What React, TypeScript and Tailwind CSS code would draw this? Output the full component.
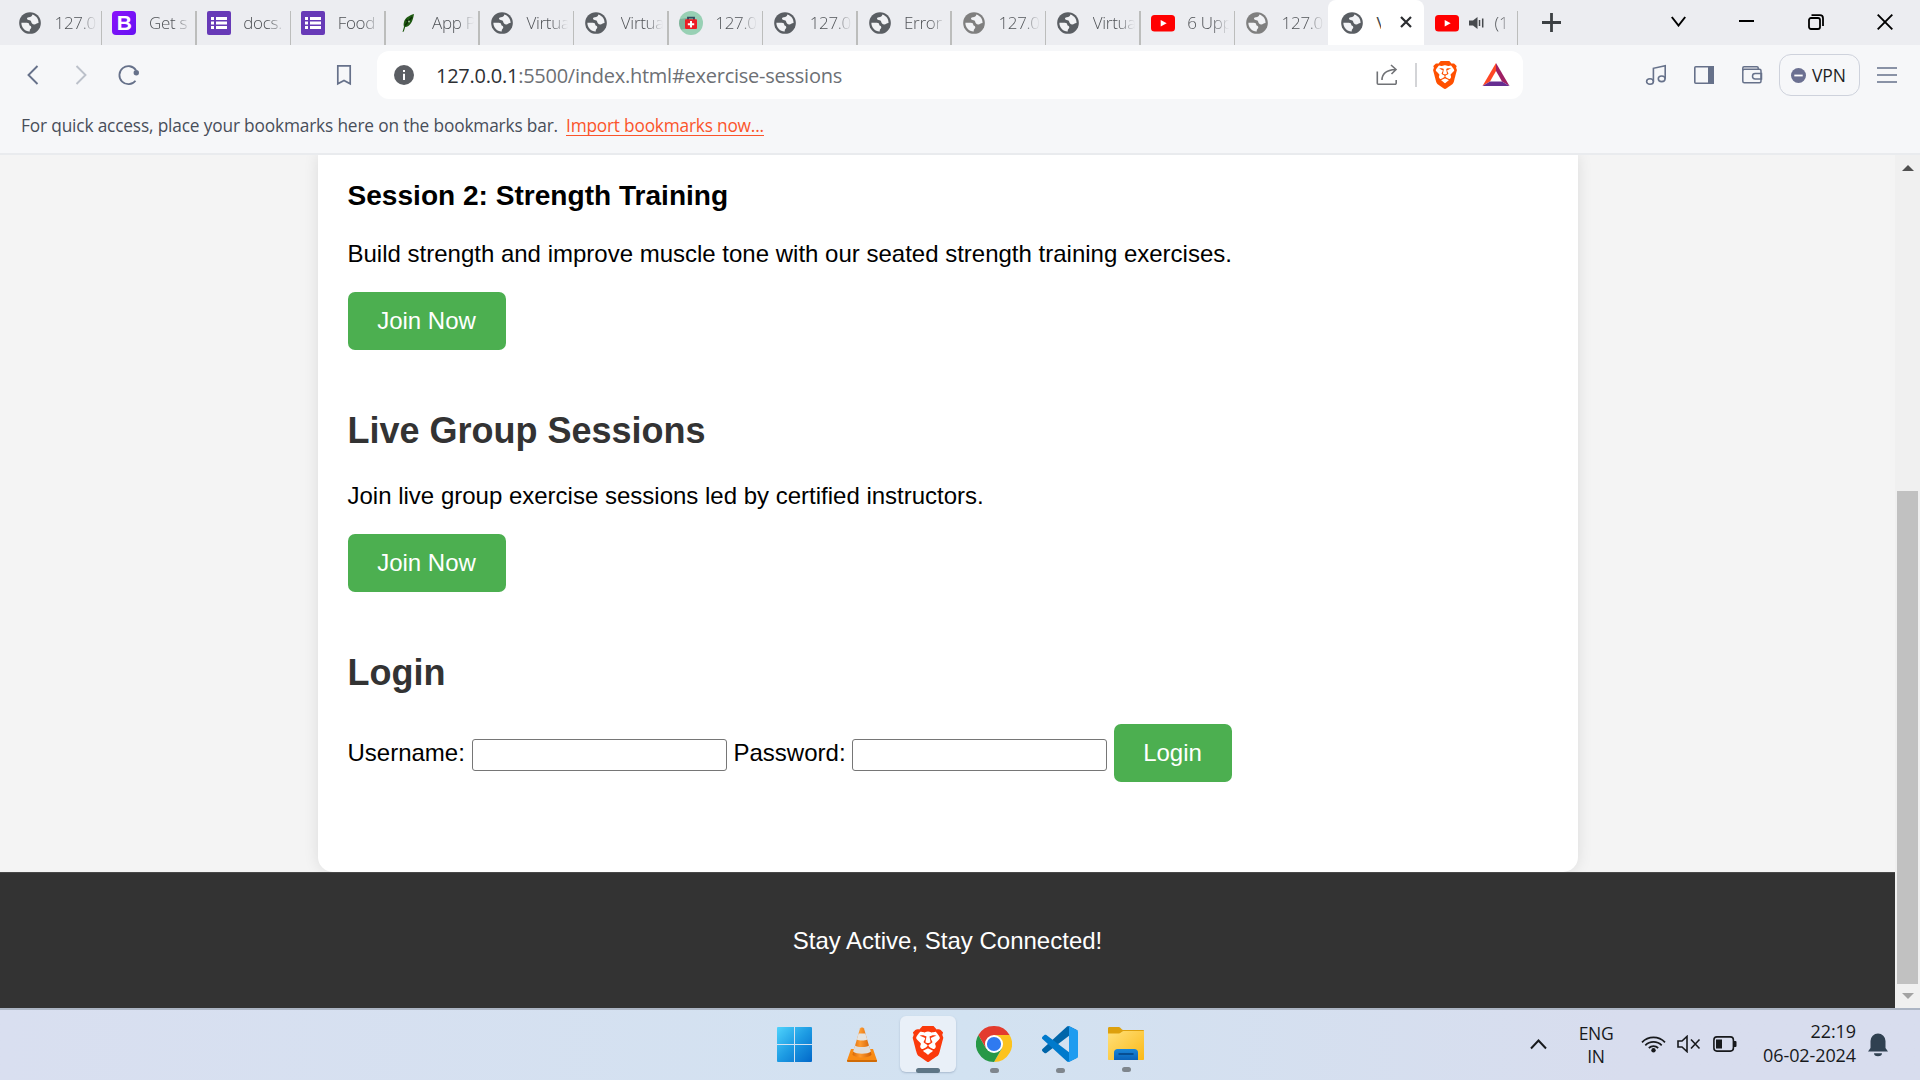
import React from "react";
import { SiBrave } from "react-icons/si";

const UI = "font-['Open_Sans','Noto_Sans',sans-serif]";

function Globe({ light = false }: { light?: boolean }) {
  return (
    <svg width="22" height="22" viewBox="0 0 24 24" className={light ? "text-[#7f7f7f]" : "text-[#5a5e63]"}>
      <circle cx="12" cy="12" r="11.8" fill="currentColor" />
      <path d="M2.600 11.800h6c1.800 0 2.600.8 2.600 2.200 0 1.300 2.200.7 2.200 2.600 0 1.700-1.700 1.600-1.700 4.600C6.500 21.300 2.500 17 2.600 11.800z" fill="#f1f2f5" />
      <path d="M14.600 2.800c-.4 2.400-1.800 2.700-3.800 2.900-2.200.2-2.600 1.700-1.500 2.600 1.300 1 3.300.3 3.800 1.900.5 1.900 1.300 3.400 3.700 3.400 1.700 0 2.200-1.500 4.500-1.500C21.600 8 19 4.300 14.600 2.800z" fill="#f1f2f5" />
    </svg>
  );
}

function Bootstrap() {
  return (
    <span className="flex h-6 w-6 items-center justify-center rounded-[4px] bg-linear-to-br from-[#8a12fb] to-[#6610f2] font-['Liberation_Sans',sans-serif] text-[21px] leading-none font-bold text-white">
      B
    </span>
  );
}

function Forms() {
  return (
    <svg width="24" height="24" viewBox="0 0 24 24">
      <rect width="24" height="24" rx="2" fill="#673ab7" />
      <path d="M4 6h3v3H4zM9 6h11v3H9zM4 10.500h3v3H4zM9 10.500h11v3H9zM4 15h3v3H4zM9 15h11v3H9z" fill="#fff" />
    </svg>
  );
}

function Leaf() {
  return (
    <svg width="24" height="24" viewBox="0 0 24 24">
      <path d="M18 3c-5 1.500-9 4-10 8-.6 2-.4 3.500 0 4.800L6.500 21l1.300-.4L9.200 16c4.800-.5 7.600-5 8.800-13z" fill="#1f5a12" />
      <path d="M16 6L9 14.500M10 9l3 1.500" stroke="#0d2c08" strokeWidth="1.400" fill="none" />
      <circle cx="13" cy="10.500" r="1" fill="#a8c79d" />
    </svg>
  );
}

function FirstAid() {
  return (
    <svg width="24" height="24" viewBox="0 0 24 24">
      <circle cx="12" cy="12" r="12" fill="#98d0b4" />
      <path d="M6 18L2 18.500A12 12 0 0 1 1 8L8 7z" fill="#7fae98" />
      <path d="M9 9V6.700h6V9" stroke="#2e4a5e" strokeWidth="1.800" fill="none" />
      <rect x="6" y="8.300" width="12" height="9.700" rx="1" fill="#ed1c24" />
      <path d="M12 10v6.400M8.800 13.200h6.400" stroke="#fff" strokeWidth="2" />
    </svg>
  );
}

function YouTube() {
  return (
    <svg width="24" height="24" viewBox="0 0 24 24">
      <rect y="4" width="24" height="16.500" rx="3.500" fill="#f00" />
      <path d="M9.700 8.900l6 3.300-6 3.400z" fill="#fff" />
    </svg>
  );
}

const tabs: { icon: React.ReactNode; text: string; line?: boolean }[] = [
  { icon: <Globe />, text: "127.0" },
  { icon: <Bootstrap />, text: "Get s" },
  { icon: <Forms />, text: "docs." },
  { icon: <Forms />, text: "Food" },
  { icon: <Leaf />, text: "App P" },
  { icon: <Globe />, text: "Virtua" },
  { icon: <Globe />, text: "Virtua" },
  { icon: <FirstAid />, text: "127.0" },
  { icon: <Globe />, text: "127.0" },
  { icon: <Globe />, text: "Error" },
  { icon: <Globe light />, text: "127.0" },
  { icon: <Globe />, text: "Virtua" },
  { icon: <YouTube />, text: "6 Upp" },
  { icon: <Globe light />, text: "127.0", line: false },
];

function TabStrip() {
  return (
    <div className="flex h-[45px] w-full bg-[#ecedf1] pl-2">
      {tabs.map((t, i) => (
        <div key={i} className="flex h-full w-[94.400px] shrink-0 items-end">
          <div className="flex h-[45px] flex-1 items-center overflow-hidden pl-[10px]">
            <span className="flex w-6 shrink-0 justify-center">{t.icon}</span>
            <span className="ml-[12.500px] w-[42px] overflow-hidden mask-r-from-60% mask-r-to-100% text-[17px] leading-[26px] font-light tracking-[-0.3px] whitespace-nowrap text-[#505357]">
              {t.text}
            </span>
          </div>
          <div className={t.line === false ? "w-px" : "h-[34px] w-[1.500px] shrink-0 bg-[#bcbdbc]"} />
        </div>
      ))}
      <div className="-ml-[1px] flex h-full w-[96px] shrink-0 items-center rounded-t-[8px] bg-white pl-[13px]">
        <Globe />
        <span className="ml-[13px] w-[5px] overflow-hidden text-[17px] leading-[26px] text-[#444]">V</span>
        <svg width="12" height="12" viewBox="0 0 12 12" className="ml-[19px] mb-px">
          <path d="M1 1l10 10M11 1L1 11" stroke="#2b2d30" strokeWidth="2.200" />
        </svg>
      </div>
      <div className="flex w-[94px] items-end">
        <div className="flex h-full flex-1 items-center pl-[11px]">
          <YouTube />
          <svg width="16" height="14" viewBox="0 0 16 14" className="ml-[10px]">
            <path d="M0 4.500h4L8.500 1v12L4 9.500H0z" fill="#46494d" />
            <path d="M10.500 4v6M13.700 2.500v9" stroke="#46494d" strokeWidth="1.500" />
          </svg>
          <span className="ml-[9px] w-[15px] overflow-hidden mask-r-from-50% mask-r-to-100% text-[17px] leading-[26px] font-light text-[#55585c]">(1</span>
        </div>
        <div className="h-[34px] w-[1.500px] bg-[#bcbdbc]" />
      </div>
      <svg width="19" height="19" viewBox="0 0 19 19" className="mt-[13px] ml-[24px]">
        <path d="M9.500 0v19M0 9.500h19" stroke="#3c4043" strokeWidth="2.800" />
      </svg>
      <svg width="15" height="11" viewBox="0 0 15 11" className="mt-[16px] ml-[110px]">
        <path d="M.8 1l6.700 8.500L14.200 1" fill="none" stroke="#000" strokeWidth="2" />
      </svg>
      <div className="mt-[20px] ml-[53px] h-[2px] w-[15px] bg-black" />
      <svg width="16" height="16" viewBox="0 0 16 16" className="mt-[14px] ml-[53.500px]">
        <rect x="1" y="4" width="11" height="11" rx="2" fill="none" stroke="#000" strokeWidth="1.800" />
        <path d="M3.500 1.200H12a3 3 0 0 1 3 3V12" fill="none" stroke="#000" strokeWidth="1.800" />
      </svg>
      <svg width="16" height="16" viewBox="0 0 16 16" className="mt-[14px] ml-[53px]">
        <path d="M.7.7l14.600 14.600M15.300.7L.7 15.300" stroke="#000" strokeWidth="1.900" />
      </svg>
    </div>
  );
}

function BraveLogo({ size, className }: { size: number; className: string }) {
  return (
    <span className={className}>
      <svg width={size} height={size} viewBox="0 0 24 24" className="col-start-1 row-start-1">
        <path d="M7 3h10l4 5-2 9-7 5-7-5L3 8z" fill="#fff" />
      </svg>
      <SiBrave size={size} className="col-start-1 row-start-1" />
    </span>
  );
}

function Toolbar() {
  return (
    <div className="flex h-[60px] items-center text-[#66718a]">
      <svg width="12" height="20" viewBox="0 0 12 20" className="ml-[27px]">
        <path d="M10.500 1L1.500 10l9 9" fill="none" stroke="currentColor" strokeWidth="1.900" />
      </svg>
      <svg width="12" height="20" viewBox="0 0 12 20" className="ml-[36px] text-[#bcc1ca]">
        <path d="M1.500 1l9 9-9 9" fill="none" stroke="currentColor" strokeWidth="1.900" />
      </svg>
      <svg width="22" height="22" viewBox="0 0 22 22" className="ml-[31px] -mt-px">
        <path d="M17.500 16.700A9 9 0 1 1 18 6.300" fill="none" stroke="currentColor" strokeWidth="1.800" />
        <circle cx="18.300" cy="8.700" r="2.700" fill="currentColor" />
      </svg>
      <svg width="16" height="22" viewBox="0 0 16 22" className="ml-[196px]">
        <path d="M1.800 1.800h12.400v18L8 16.500l-6.200 3.300z" fill="none" stroke="currentColor" strokeWidth="1.700" />
      </svg>
      <div className="ml-[25px] flex h-12 w-[1146px] items-center rounded-[12px] bg-white pl-[17px]">
        <svg width="20" height="20" viewBox="0 0 20 20">
          <circle cx="10" cy="10" r="10" fill="#5b5e63" />
          <path d="M9 8.700h2V15H9zM9 5h2v2H9z" fill="#fff" />
        </svg>
        <span className="mt-px ml-[22px] w-[600px] text-[20px] leading-[28px] tracking-[-0.25px] text-[#6d7075]">
          <span className="text-[#2d3034]">127.0.0.1</span>:5500/index.html#exercise-sessions
        </span>
        <svg width="22" height="22" viewBox="0 0 22 22" className="ml-[340px]">
          <path d="M1.300 7.500v11.800a1 1 0 0 0 1 1H19a1.200 1.200 0 0 0 1.200-1.200V16M6 16C6 9 11 6 19.500 5.500M15 1l5 4.500-4.500 4.500" fill="none" stroke="#707276" strokeWidth="1.600" />
        </svg>
        <div className="ml-[17px] h-6 w-[2px] bg-[#d3d4d7]" />
        <BraveLogo size={28} className="ml-[14px] grid text-[#ff5000]" />
        <svg width="28" height="24" viewBox="0 0 28 24" className="ml-[23px]">
          <path d="M14 0L.5 23 8 18.500l6-10.500z" fill="#ff4724" />
          <path d="M14 0l13.500 23L20 18.500 14 8z" fill="#9e1f63" />
          <path d="M.5 23h27L20 18.500H8z" fill="#662d91" />
        </svg>
      </div>
      <svg width="22" height="22" viewBox="0 0 22 22" className="ml-[122px]">
        <g fill="none" stroke="currentColor" strokeWidth="1.600">
          <ellipse cx="5" cy="17.500" rx="3.400" ry="2.800" />
          <ellipse cx="16.700" cy="14.800" rx="3.400" ry="2.800" />
          <path d="M8.400 17.500V4.300L20.200 1.800v13" />
        </g>
      </svg>
      <svg width="20" height="18" viewBox="0 0 20 18" className="ml-[27px]">
        <rect x=".8" y=".8" width="18.400" height="16.400" rx="1" fill="none" stroke="currentColor" strokeWidth="1.600" />
        <path d="M14 0h6v18h-6z" fill="currentColor" />
      </svg>
      <svg width="22" height="20" viewBox="0 0 22 20" className="ml-[27px]">
        <g fill="none" stroke="currentColor" strokeWidth="1.500">
          <rect x="1.800" y="4.300" width="18.200" height="13.500" rx="1.500" />
          <path d="M1.800 5.500V3a1.200 1.200 0 0 1 1.200-1.200h13A1.200 1.200 0 0 1 17.200 3v1.300M20.500 8.500h-6.300a2.700 2.700 0 0 0 0 5.400h6.300z" />
        </g>
      </svg>
      <div className="ml-[16px] flex h-[42px] w-[81px] items-center rounded-[12px] border border-[#ced2dc] pl-[11px]">
        <svg width="15" height="15" viewBox="0 0 15 15">
          <circle cx="7.500" cy="7.500" r="7.500" fill="#6b7091" />
          <path d="M3.300 7.500h8.400" stroke="#fff" strokeWidth="1.800" />
        </svg>
        <span className="ml-[6px] text-[17.500px] leading-[24px] tracking-[-0.1px] text-[#1d1f25]">VPN</span>
      </div>
      <svg width="20" height="16" viewBox="0 0 20 16" className="ml-[17px]">
        <path d="M0 1h20M0 8h20M0 15h20" stroke="currentColor" strokeWidth="1.600" />
      </svg>
    </div>
  );
}

function GreenButton({ children, className }: { children: React.ReactNode; className: string }) {
  return (
    <button className={"flex h-[58px] shrink-0 items-center justify-center rounded-[7px] bg-[#4caf50] text-[24px] leading-[28px] text-white " + className}>
      {children}
    </button>
  );
}

function Page() {
  return (
    <div className="flex h-[853px] w-full overflow-hidden">
      <div className="flex w-[1895px] flex-col items-center bg-[#f4f4f4] font-['Liberation_Sans',Arial,sans-serif] text-[24px] leading-[28px] text-black">
        <main className="flex h-[717px] w-[1260px] shrink-0 flex-col items-start rounded-b-[15px] bg-white px-[30px] shadow-[0_0_15px_rgba(0,0,0,0.1)]">
          <h3 className="mt-[25px] text-[28.080px] leading-8 font-bold">Session 2: Strength Training</h3>
          <p className="mt-7">Build strength and improve muscle tone with our seated strength training exercises.</p>
          <GreenButton className="mt-6 w-[158px]">Join Now</GreenButton>
          <h2 className="mt-[61px] text-[36px] leading-10 font-bold text-[#333]">Live Group Sessions</h2>
          <p className="mt-[31px]">Join live group exercise sessions led by certified instructors.</p>
          <GreenButton className="mt-6 w-[158px]">Join Now</GreenButton>
          <h2 className="mt-[61px] text-[36px] leading-10 font-bold text-[#333]">Login</h2>
          <form className="mt-[31px] flex items-center">
            <label className="w-[124px]">Username:</label>
            <input className="mt-1 h-8 w-[255px] rounded-[3px] border border-[#767676] bg-white" />
            <label className="ml-[7px] w-[118px]">Password:</label>
            <input type="password" className="mt-1 h-8 w-[255px] rounded-[3px] border border-[#767676] bg-white" />
            <GreenButton className="ml-[7px] w-[118px]">Login</GreenButton>
          </form>
        </main>
        <footer className="z-10 flex h-[136px] w-full shrink-0 items-center justify-center border-t border-[#484848] bg-[#333] text-white">
          <p>Stay Active, Stay Connected!</p>
        </footer>
      </div>
      <div className="flex w-[25px] flex-col items-center bg-[#f0f0f0]">
        <svg width="12" height="6" viewBox="0 0 12 6" className="mt-[10px] shrink-0">
          <path d="M6 0l6 6H0z" fill="#505050" />
        </svg>
        <div className="mt-[320px] h-[493px] w-[21px] shrink-0 bg-[#c1c1c1]" />
        <svg width="12" height="6" viewBox="0 0 12 6" className="mt-[9px] shrink-0">
          <path d="M0 0h12L6 6z" fill="#a3a3a3" />
        </svg>
      </div>
    </div>
  );
}

function Windows() {
  return (
    <svg width="35" height="35" viewBox="0 0 35 35" className="mr-[3px]">
      <defs>
        <linearGradient id="win" x1="0" y1="0" x2="35" y2="35" gradientUnits="userSpaceOnUse">
          <stop stopColor="#4fd3fc" />
          <stop offset=".5" stopColor="#1d9be3" />
          <stop offset="1" stopColor="#0268c9" />
        </linearGradient>
      </defs>
      <path d="M0 1a1 1 0 0 1 1-1h16v17H0zM18 0h16a1 1 0 0 1 1 1v16H18zM0 18h17v17H1a1 1 0 0 1-1-1zM18 18h17v16a1 1 0 0 1-1 1H18z" fill="url(#win)" />
    </svg>
  );
}

function Cone() {
  return (
    <svg width="30" height="35" viewBox="0 0 30 35">
      <defs>
        <linearGradient id="cone">
          <stop stopColor="#d96a08" />
          <stop offset=".4" stopColor="#ff9a2e" />
          <stop offset="1" stopColor="#cf5e04" />
        </linearGradient>
      </defs>
      <path d="M4 22h22l4 11.500c0 1-.5 1.500-1.500 1.500h-27C.5 35 0 34.500 0 33.500z" fill="#f98b14" />
      <path d="M0 33h30v.800c0 .8-.5 1.200-1.500 1.200h-27C.5 35 0 34.500 0 33.800z" fill="#d06b06" />
      <path d="M13 1.500c.5-1.500 3.500-1.500 4 0l7.500 26c-2 4-17 4-19 0z" fill="url(#cone)" />
      <path d="M11.600 6.500h6.800l1.800 6c-2 1.300-8.400 1.300-10.400 0z" fill="#e4e4e2" />
      <path d="M8 18.500c3 2 11 2 14 0l1.900 6c-3 3-14.800 3-17.800 0z" fill="#dedddb" />
    </svg>
  );
}

function Chrome() {
  return (
    <svg width="36" height="36" viewBox="0 0 36 36">
      <path d="M18 9H33.590A18 18 0 0 1 18 36l7.800-13.500z" fill="#fcc31e" />
      <path d="M2.410 9A18 18 0 0 0 18 36l7.800-13.500L18 24 10.200 22.500z" fill="#279847" />
      <path d="M2.410 9A18 18 0 0 1 33.590 9H18l-7.800 13.500z" fill="#e33b2e" />
      <circle cx="18" cy="18" r="9" fill="#fff" />
      <circle cx="18" cy="18" r="7.100" fill="#2f7af0" />
    </svg>
  );
}

function VSCode() {
  return (
    <svg width="36" height="36" viewBox="0 0 100 100">
      <path d="M96.500 10.800L75.900.9c-2.400-1.200-5.200-.7-7.100 1.200L1.300 63.600c-1.800 1.700-1.800 4.500 0 6.200l5.500 5c1.500 1.300 3.700 1.400 5.300.2l81.200-61.600c2.700-2.100 6.700-.1 6.700 3.300v-.2c0-2.400-1.400-4.600-3.500-5.700z" fill="#0065a9" />
      <path d="M96.500 89.200l-20.600 9.900c-2.400 1.200-5.200.7-7.100-1.200L1.300 36.400c-1.800-1.700-1.800-4.500 0-6.200l5.500-5c1.500-1.300 3.700-1.400 5.300-.2l81.200 61.600c2.700 2.100 6.700.1 6.700-3.300v.2c0 2.400-1.400 4.600-3.500 5.700z" fill="#007acc" />
      <path d="M75.900 99.100c-2.400 1.200-5.300.7-7.100-1.200 2.300 2.300 6.200.7 6.200-2.600V4.700c0-3.300-3.900-4.900-6.200-2.600 1.800-1.900 4.700-2.400 7.100-1.200l20.600 9.900c2.200 1 3.500 3.200 3.500 5.600v67.200c0 2.400-1.300 4.600-3.500 5.600z" fill="#1f9cf0" />
    </svg>
  );
}

function Folder() {
  return (
    <svg width="36" height="33" viewBox="0 0 36 33">
      <defs>
        <linearGradient id="fold" x1="0" y1="0" x2="1" y2="1">
          <stop stopColor="#ffe07a" />
          <stop offset="1" stopColor="#fbb917" />
        </linearGradient>
        <linearGradient id="tray" x1="0" y1="0" x2="0" y2="1">
          <stop stopColor="#1a86d8" />
          <stop offset="1" stopColor="#0a62b8" />
        </linearGradient>
      </defs>
      <path d="M0 1.500C0 .5.500 0 1.500 0h9.500c1.500 0 2.500 3 4 3h20c.7 0 1 .500 1 1v6H0z" fill="#dda00d" />
      <path d="M0 6.500h11c2 0 2.500-2.500 4.500-2.500H36v28c0 .6-.4 1-1 1H1c-.6 0-1-.4-1-1z" fill="url(#fold)" />
      <path d="M6 33v-7.500C6 23.500 7.500 22 9.500 22h17c2 0 3.500 1.500 3.500 3.500V33z" fill="url(#tray)" />
      <path d="M10.500 27h15" stroke="#064a8c" strokeWidth="1.800" />
    </svg>
  );
}

function TaskbarApp({ children, active, dot = true }: { children: React.ReactNode; active?: boolean; dot?: boolean }) {
  return (
    <div
      className={
        active
          ? "flex h-14 w-14 flex-col items-center rounded-[6px] bg-[#e9f0f8] pt-[10px] shadow-[0_1px_2px_rgba(90,110,140,0.35)]"
          : "flex h-14 w-14 flex-col items-center pt-[10px]"
      }
    >
      <div className="flex h-9 items-center">{children}</div>
      {dot && <div className={active ? "mt-[6px] h-[5px] w-6 shrink-0 rounded-full bg-[#5d7585]" : "mt-[6px] h-[5px] w-[9px] shrink-0 rounded-full bg-[#7f868d]"} />}
    </div>
  );
}

function Taskbar() {
  return (
    <div className="flex h-[72px] w-full border-t-2 border-[#acb5c4] bg-linear-to-r from-[#d9dff0] via-[#d2e2f1] to-[#d8ddee] to-85% text-[#17191c]">
      <div className="mt-[6px] ml-[768px] flex h-14 gap-[10px]">
        <TaskbarApp dot={false}><Windows /></TaskbarApp>
        <TaskbarApp dot={false}><Cone /></TaskbarApp>
        <TaskbarApp active>
          <BraveLogo size={36} className="grid text-[#fb3a0c]" />
        </TaskbarApp>
        <TaskbarApp><Chrome /></TaskbarApp>
        <TaskbarApp><VSCode /></TaskbarApp>
        <TaskbarApp><Folder /></TaskbarApp>
      </div>
      <div className="ml-[376px] flex h-full items-center">
        <svg width="17" height="11" viewBox="0 0 17 11" className="mt-[-1px]">
          <path d="M1 9.500l7.500-8 7.500 8" fill="none" stroke="currentColor" strokeWidth="2" />
        </svg>
        <div className="ml-[27px] w-[44px] text-center text-[17.500px] leading-[23px] tracking-[-0.3px]">
          ENG
          <br />
          IN
        </div>
        <svg width="25" height="19" viewBox="0 0 25 19" className="ml-[23px] mt-[-3px]">
          <g fill="none" stroke="currentColor" strokeWidth="1.700">
            <path d="M1 8.300a16 16 0 0 1 23 0M4.300 11.300a11.500 11.500 0 0 1 16.400 0M7.800 14a7 7 0 0 1 9.400 0" />
          </g>
          <circle cx="12.500" cy="16.300" r="2.200" fill="currentColor" />
        </svg>
        <svg width="24" height="18" viewBox="0 0 24 18" className="ml-[11px] mt-[-2px]">
          <path d="M1 6h4l5-4.600v15.200L5 12H1zM14 4.500l8.500 9M22.500 4.500l-8.500 9" fill="none" stroke="currentColor" strokeWidth="1.600" />
        </svg>
        <svg width="24" height="16" viewBox="0 0 24 16" className="ml-[12px] mt-[-2px]">
          <rect x=".9" y=".9" width="19.500" height="14.200" rx="3" fill="none" stroke="currentColor" strokeWidth="1.600" />
          <path d="M3 3.500h6v9H3zM21 5h1.500a1 1 0 0 1 1 1v4a1 1 0 0 1-1 1H21z" fill="currentColor" />
        </svg>
        <div className="mb-1 w-[119px] text-right text-[18px] leading-[24px] tracking-[-0.1px] whitespace-nowrap">
          22:19
          <br />
          06-02-2024
        </div>
        <svg width="20" height="24" viewBox="0 0 20 24" className="ml-[12px] text-[#304151]">
          <path d="M0 18.500L2.500 15V8a7.500 7.500 0 0 1 15 0v7l2.500 3.500zM6 20.300h8a4 3 0 0 1-8 0z" fill="currentColor" />
        </svg>
      </div>
    </div>
  );
}

export default function App() {
  return (
    <div className={"flex h-[1080px] w-[1920px] flex-col overflow-hidden bg-white " + UI}>
      <TabStrip />
      <div className="h-[110px] border-b-2 border-[#e9ebee] bg-[#f6f7f9]">
        <Toolbar />
        <div className="flex h-[42px] items-center pl-[21px] text-[17.300px] leading-6 tracking-[-0.160px] text-[#484e5a]">
          <span className="w-[545px] whitespace-nowrap">For quick access, place your bookmarks here on the bookmarks bar.</span>
          <a className="border-b border-[#fb542b] leading-[19px] tracking-[-0.2px] whitespace-nowrap text-[#fb542b]">Import bookmarks now...</a>
        </div>
      </div>
      <Page />
      <Taskbar />
    </div>
  );
}
